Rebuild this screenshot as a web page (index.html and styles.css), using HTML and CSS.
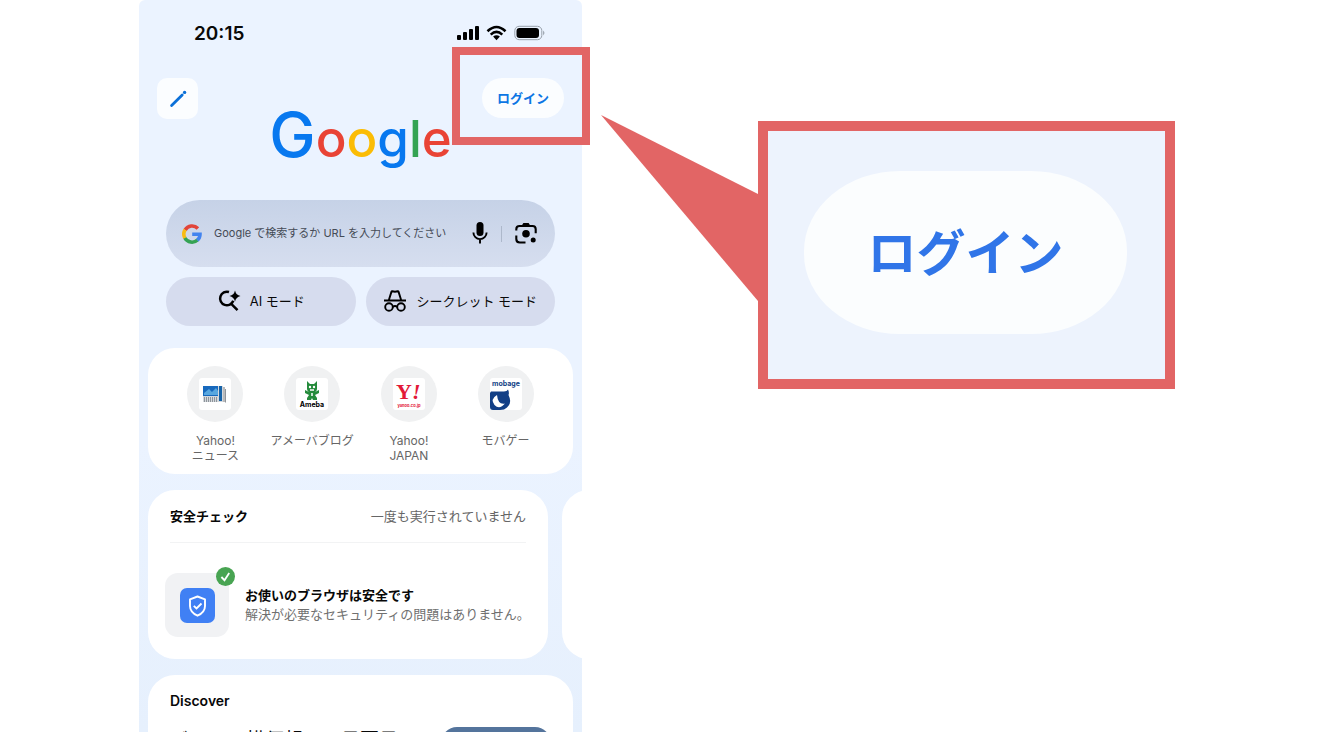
FILE: index.html
```html
<!DOCTYPE html>
<html lang="ja">
<head>
<meta charset="utf-8">
<meta name="viewport" content="width=device-width, initial-scale=1">
<title>Google ログイン</title>
<link rel="stylesheet" href="styles.css">
</head>
<body>
<main class="guide">
  <section class="phone">
    <div class="screen">
      <div class="status">
        <span class="time">20:15</span>
        <svg class="status-icons" width="90" height="18" viewBox="0 0 90 18" aria-hidden="true">
          <rect x="0" y="11" width="4" height="5" rx="1"/><rect x="6" y="8" width="4" height="8" rx="1"/><rect x="12" y="5" width="4" height="11" rx="1"/><rect x="18" y="2" width="4" height="14" rx="1"/>
          <g fill="none" stroke="#000" stroke-width="2.6"><path d="M30.5 7.2Q39.5 -1.2 48.5 7.2"/><path d="M33.7 10.6Q39.5 5.2 45.3 10.6"/></g>
          <path d="M36.1 12.6Q39.5 9.8 42.9 12.6L39.5 16.2Z"/>
          <rect x="57.8" y="2.3" width="27" height="13.4" rx="4.3" fill="none" stroke="#98a0aa"/><rect x="59.5" y="4" width="22.5" height="10" rx="3"/><path d="M86.1 6.6Q88.8 9 86.1 11.4Z" fill="#98a0aa"/>
        </svg>
      </div>
      <header class="top">
        <button class="edit" aria-label="編集"><svg width="20" height="20" viewBox="0 0 20 20"><path d="M3.6 16.4L14.2 6" stroke="#0b70d8" stroke-width="2.8" stroke-linecap="round"/><circle cx="16.6" cy="3.4" r="1.7" fill="#0b70d8"/></svg></button>
        <h1 class="wordmark"><span class="blue cap">G</span><span class="red">o</span><span class="yellow">o</span><span class="blue">g</span><span class="green">l</span><span class="red">e</span></h1>
        <button class="login">ログイン</button>
      </header>
      <div class="search">
        <svg width="20" height="20" viewBox="0 0 20 20" aria-hidden="true"><g fill="none" stroke-width="3.6"><path d="M3.1 6A8.1 8.1 0 0 1 15.9 4.5" stroke="#e2453a"/><path d="M3.1 14.3A8.1 8.1 0 0 1 3.1 5.7" stroke="#f8bc15"/><path d="M15.5 16A8.1 8.1 0 0 1 2.9 14" stroke="#35a354"/><path d="M10.2 10.2H18Q18 14 15.2 16.2" stroke="#4384ef"/></g></svg>
        <input class="query" type="text" aria-label="検索" placeholder="Google で検索するか URL を入力してください">
        <button class="tool mic" aria-label="音声検索"><svg width="18" height="24" viewBox="0 0 18 24"><rect x="5.5" y="0" width="7" height="14" rx="3.5"/><path d="M2.4 10.5A6.6 6.6 0 0 0 15.6 10.5M9 17V21.5" fill="none" stroke="#000" stroke-width="1.9"/></svg></button>
        <button class="tool lens" aria-label="画像検索"><svg width="24" height="24" viewBox="0 0 24 24"><path d="M2.3 8.5V7.2Q2.3 4 5.5 4H18.5Q21.7 4 21.7 7.2V11.3M2.3 13.5V17Q2.3 20.5 5.8 20.5H11.5" fill="none" stroke="#000" stroke-width="2.1"/><path d="M7.5 4L9.4 1H14.6L16.5 4Z"/><circle cx="12" cy="11.8" r="3.8"/><circle cx="19.2" cy="18" r="2.5"/></svg></button>
      </div>
      <div class="modes">
        <button class="mode"><svg width="24" height="24" viewBox="0 0 24 24"><path d="M12 3A6.8 6.8 0 1 0 16.3 11.8M14 14.7L20.5 21.2" fill="none" stroke="#000" stroke-width="2.5"/><path d="M18 1.5Q19 6 23.5 7Q19 8 18 12.5Q17 8 12.5 7Q17 6 18 1.5Z"/></svg>AI モード</button>
        <button class="mode"><svg width="24" height="24" viewBox="0 0 24 24"><g fill="none" stroke="#000" stroke-width="1.9"><path d="M1 11.5H23M5.8 11.2L8.4 2.9Q8.6 2.2 9.4 2.3L12 2.7L14.6 2.3Q15.4 2.2 15.6 2.9L18.2 11.2"/><circle cx="6" cy="18" r="3.8"/><circle cx="18" cy="18" r="3.8"/><path d="M9.8 18Q12 16.2 14.2 18"/></g></svg>シークレット モード</button>
      </div>
      <nav class="card shortcuts">
        <a class="shortcut" href="#"><span class="disc"><svg width="32" height="32" viewBox="0 0 32 32"><rect width="32" height="32" rx="3" fill="#fff"/><path d="M4 8H24V24H4Z" fill="#d4d8dc"/><path d="M4 8H19V18H4Z" fill="#1769bd"/><path d="M5 15L10 11L13 14L17 10L19 13V17H5Z" fill="#58a7df"/><path d="M20 8H23V23H20Z" fill="#1663a8"/><path d="M24 9H26V24H24Z" fill="#bbb"/><path d="M26.5 11V24.5M5.5 19V24M7.5 19V24M9.5 19V24M11.5 19V24M13.5 19V24M15.5 19V24M17.5 19V24" stroke="#8f959b"/></svg></span><span>Yahoo!<br>ニュース</span></a>
        <a class="shortcut" href="#"><span class="disc"><svg width="32" height="32" viewBox="0 0 32 32"><rect width="32" height="32" rx="3" fill="#fff"/><path d="M11 3L14 6H18L21 3V11Q21 13 19 14L23 12V15L19 17L21 20V22H17L16 20L15 22H11V20L13 17L9 15V12L13 14Q11 13 11 11Z" fill="#258b3c"/><circle cx="14" cy="9" r="1.2" fill="#fff"/><circle cx="18" cy="9" r="1.2" fill="#fff"/><path d="M14 12H18M16 15V18" stroke="#fff" stroke-width="1.5"/><text class="tiny" x="16" y="29" text-anchor="middle">Ameba</text></svg></span><span>アメーバブログ</span></a>
        <a class="shortcut" href="#"><span class="disc"><svg width="32" height="32" viewBox="0 0 32 32"><rect width="32" height="32" rx="3" fill="#fff"/><text class="yahoo" x="3" y="21">Y<tspan font-style="italic">!</tspan></text><text class="yahoo-url" x="16" y="29" text-anchor="middle">yahoo.co.jp</text></svg></span><span>Yahoo!<br>JAPAN</span></a>
        <a class="shortcut" href="#"><span class="disc"><svg width="32" height="32" viewBox="0 0 32 32"><rect width="32" height="32" rx="3" fill="#fff"/><text class="mobage" x="16" y="8" text-anchor="middle">mobage</text><path d="M1 13.5H14Q17 13.5 18 11.5Q19.5 14.5 18.5 17Q22.5 25 17 29.5Q14.5 32 10 32H3Q0 32 0 29V15Z" fill="#123f86"/><path d="M7 17Q0 21 4.5 27Q9.5 32 15 25.5Q8 27 7 17Z" fill="#fff"/></svg></span><span>モバゲー</span></a>
      </nav>
      <div class="carousel">
        <article class="card safety">
          <div class="safety-head"><h2>安全チェック</h2><span>一度も実行されていません</span></div>
          <div class="safety-body">
            <div class="shield">
              <svg width="35" height="35" viewBox="0 0 35 35"><rect width="35" height="35" rx="7" fill="#4080f4"/><path d="M17.5 8.5L25 11.3V18Q25 24.3 17.5 27.7Q10 24.3 10 18V11.3Z" fill="none" stroke="#fff" stroke-width="1.9" stroke-linejoin="round"/><path d="M13.8 17.8L16.5 20.5L21.5 15.5" fill="none" stroke="#fff" stroke-width="1.9"/></svg>
              <svg class="badge" width="19" height="19" viewBox="0 0 19 19"><circle cx="9.5" cy="9.5" r="9.5" fill="#48a452"/><path d="M5.4 10L8.5 13.2L13.2 6" fill="none" stroke="#fff" stroke-width="1.8"/></svg>
            </div>
            <div class="safety-text"><h3>お使いのブラウザは安全です</h3><p>解決が必要なセキュリティの問題はありません。</p></div>
          </div>
        </article>
        <article class="card safety"></article>
      </div>
      <section class="card discover">
        <h2>Discover</h2>
        <div class="story"><p>ビジョー横便報っ、日要日ト</p><div class="thumb"></div></div>
      </section>
    </div>
    <div class="highlight"></div>
  </section>
  <aside class="callout">
    <svg class="tail" width="157" height="186" viewBox="0 0 157 186" aria-hidden="true"><polygon points="0,0 157,79 157,186"/></svg>
    <button class="login-large">ログイン</button>
  </aside>
</main>
</body>
</html>
```

FILE: styles.css
```css
* { box-sizing: border-box; }
body {
  margin: 0;
  height: 100vh;
  overflow: hidden;
  background: #fff;
  color: #080808;
  font-family: Inter, "Noto Sans CJK JP", sans-serif;
  font-size: 13px;
}
h1, h2, h3, p { margin: 0; }
svg { display: block; flex: none; }
button {
  border: 0;
  padding: 0;
  color: inherit;
  font: inherit;
}
.guide {
  display: grid;
  grid-template-columns: 139fr 443fr 176fr 417fr 160fr;
  height: 100%;
}
.phone {
  grid-column: 2;
  position: relative;
  min-width: 0;
  min-height: 0;
}
.screen {
  height: 100%;
  overflow: hidden;
  padding: 0 9px;
  border-radius: 6px 6px 0 0;
  background: linear-gradient(#ebf3ff 60%, #e6f0fd);
}
.status {
  display: flex;
  align-items: center;
  justify-content: space-between;
  height: 78px;
  padding: 0 26px 12px 46px;
}
.time { font-size: 19px; font-weight: 600; }
.top {
  display: grid;
  grid-template-columns: 82px 1fr 82px;
  align-items: start;
  height: 122px;
  padding: 0 9px;
}
.edit {
  display: grid;
  place-items: center;
  width: 41px;
  height: 41px;
  border-radius: 10px;
  background: #fbfdff;
}
.wordmark {
  display: flex;
  align-items: baseline;
  justify-content: center;
  padding-top: 19px;
  font: 500 51px/76px Inter, sans-serif;
  white-space: nowrap;
}
.cap { font-size: 62px; }
.blue { color: #0878ef; }
.red { color: #e94335; }
.yellow { color: #fbbc05; }
.green { color: #34a353; }
.login {
  height: 40px;
  padding-bottom: 2px;
  border-radius: 20px;
  background: #fbfdff;
  color: #0b76e4;
  font-weight: 600;
}
.search {
  display: flex;
  align-items: center;
  height: 67px;
  margin: 0 18px;
  padding: 0 17px 0 16px;
  border-radius: 34px;
  background: linear-gradient(#c6d2e7, #d6deef);
}
.query {
  flex: 1;
  min-width: 0;
  padding: 0 0 2px 12px;
  border: 0;
  background: none;
  font: 11px/20px Inter, "Noto Sans CJK JP", sans-serif;
}
.query::placeholder { color: #454b56; opacity: 1; }
.tool { background: none; }
.mic { margin-right: 12px; }
.lens {
  padding-left: 13px;
  background: linear-gradient(#adb8cb, #adb8cb) left / 1px 16px no-repeat;
}
.modes {
  display: flex;
  gap: 10px;
  margin: 10px 18px 22px;
}
.mode {
  flex: 1;
  display: flex;
  align-items: center;
  justify-content: center;
  gap: 9px;
  height: 49px;
  padding-bottom: 2px;
  border-radius: 25px;
  background: #d6dcee;
  white-space: nowrap;
}
.card {
  border-radius: 27px;
  background: #fff;
}
.shortcuts {
  display: grid;
  grid-template-columns: repeat(4, 1fr);
  height: 126px;
  padding: 18px 19px 0;
}
.shortcut {
  display: flex;
  flex-direction: column;
  align-items: center;
  gap: 11px;
  color: #666;
  font-size: 12px;
  line-height: 15px;
  text-align: center;
  text-decoration: none;
  white-space: nowrap;
}
.disc {
  display: grid;
  place-items: center;
  width: 56px;
  height: 56px;
  border-radius: 50%;
  background: #f0f1f2;
}
.tiny { font: 700 7px Inter, sans-serif; }
.yahoo { font: 700 22px "Liberation Serif", serif; fill: #e31937; }
.yahoo-url { font: 700 4px Inter, sans-serif; fill: #e31937; }
.mobage { font: 700 7px Inter, sans-serif; fill: #123f86; }
.carousel {
  display: flex;
  gap: 14px;
  margin: 16px -9px 16px 0;
  overflow: hidden;
}
.safety {
  flex: 0 0 calc(100% - 34px);
  height: 169px;
  padding: 0 22px;
}
.safety-head {
  display: flex;
  align-items: center;
  justify-content: space-between;
  height: 53px;
  padding-bottom: 2px;
  border-bottom: 1px solid #f2f3f4;
  color: #666;
  white-space: nowrap;
}
h2, h3 { color: #080808; font-size: 13px; font-weight: 600; }
.safety-body {
  display: flex;
  align-items: center;
  gap: 16px;
  margin: 30px -10px 0 -5px;
}
.shield {
  position: relative;
  display: grid;
  place-items: center;
  flex: none;
  width: 64px;
  height: 64px;
  border-radius: 13px;
  background: #f1f2f4;
}
.badge { position: absolute; top: -6px; right: -6px; }
.safety-text {
  color: #707070;
  line-height: 19px;
  white-space: nowrap;
}
.discover { height: 180px; padding: 16px 22px; }
.discover h2 { font-size: 14px; line-height: 20px; }
.story {
  display: flex;
  justify-content: space-between;
  padding-top: 16px;
}
.story p {
  font-size: 19px;
  line-height: 28px;
  white-space: nowrap;
}
.thumb {
  flex: 0 0 110px;
  height: 100px;
  border-radius: 16px;
  background: #54749c;
}
.highlight {
  position: absolute;
  top: 47px;
  right: -8px;
  width: 138px;
  height: 98px;
  border: 8px solid #e26565;
}
.callout {
  grid-column: 4;
  position: relative;
  display: flex;
  align-self: start;
  height: 268px;
  margin-top: 121px;
  padding: 40px 38px 45px 36px;
  border: 10px solid #e26565;
  background: #edf3fd;
}
.tail {
  position: absolute;
  top: -16px;
  right: calc(100% + 10px);
  fill: #e26565;
}
.login-large {
  flex: 1;
  padding-bottom: 6px;
  border-radius: 96px / 80px;
  background: #fbfdfe;
  color: #3075e8;
  font-size: 49px;
  font-weight: 600;
}
```
